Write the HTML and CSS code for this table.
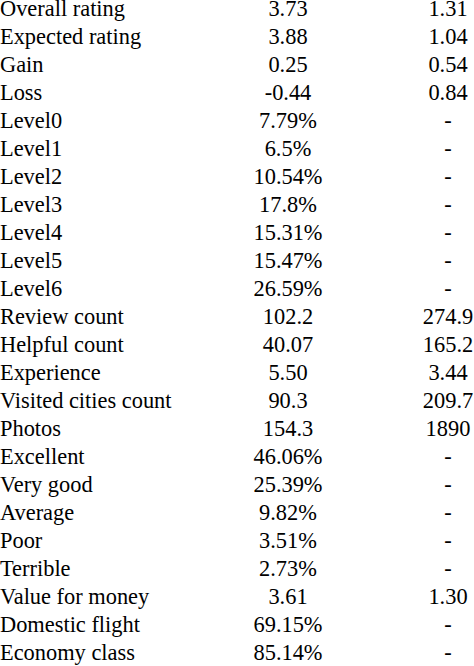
FILE: index.html
```html
<!DOCTYPE html>
<html>
<head>
<meta charset="utf-8">
<link rel="stylesheet" href="styles.css">
</head>
<body>
<div class="table">
  <div class="row"><span class="c1">Overall rating</span><span class="c2">3.73</span><span class="c3">1.31</span></div>
  <div class="row"><span class="c1">Expected rating</span><span class="c2">3.88</span><span class="c3">1.04</span></div>
  <div class="row"><span class="c1">Gain</span><span class="c2">0.25</span><span class="c3">0.54</span></div>
  <div class="row"><span class="c1">Loss</span><span class="c2">-0.44</span><span class="c3">0.84</span></div>
  <div class="row"><span class="c1">Level0</span><span class="c2">7.79%</span><span class="c3">-</span></div>
  <div class="row"><span class="c1">Level1</span><span class="c2">6.5%</span><span class="c3">-</span></div>
  <div class="row"><span class="c1">Level2</span><span class="c2">10.54%</span><span class="c3">-</span></div>
  <div class="row"><span class="c1">Level3</span><span class="c2">17.8%</span><span class="c3">-</span></div>
  <div class="row"><span class="c1">Level4</span><span class="c2">15.31%</span><span class="c3">-</span></div>
  <div class="row"><span class="c1">Level5</span><span class="c2">15.47%</span><span class="c3">-</span></div>
  <div class="row"><span class="c1">Level6</span><span class="c2">26.59%</span><span class="c3">-</span></div>
  <div class="row"><span class="c1">Review count</span><span class="c2">102.2</span><span class="c3">274.9</span></div>
  <div class="row"><span class="c1">Helpful count</span><span class="c2">40.07</span><span class="c3">165.2</span></div>
  <div class="row"><span class="c1">Experience</span><span class="c2">5.50</span><span class="c3">3.44</span></div>
  <div class="row"><span class="c1">Visited cities count</span><span class="c2">90.3</span><span class="c3">209.7</span></div>
  <div class="row"><span class="c1">Photos</span><span class="c2">154.3</span><span class="c3">1890</span></div>
  <div class="row"><span class="c1">Excellent</span><span class="c2">46.06%</span><span class="c3">-</span></div>
  <div class="row"><span class="c1">Very good</span><span class="c2">25.39%</span><span class="c3">-</span></div>
  <div class="row"><span class="c1">Average</span><span class="c2">9.82%</span><span class="c3">-</span></div>
  <div class="row"><span class="c1">Poor</span><span class="c2">3.51%</span><span class="c3">-</span></div>
  <div class="row"><span class="c1">Terrible</span><span class="c2">2.73%</span><span class="c3">-</span></div>
  <div class="row"><span class="c1">Value for money</span><span class="c2">3.61</span><span class="c3">1.30</span></div>
  <div class="row"><span class="c1">Domestic flight</span><span class="c2">69.15%</span><span class="c3">-</span></div>
  <div class="row"><span class="c1">Economy class</span><span class="c2">85.14%</span><span class="c3">-</span></div>
</div>
</body>
</html>
```

FILE: styles.css
```css
html, body {
  margin: 0;
  padding: 0;
  background: #ffffff;
  overflow: hidden;
}

.table {
  font-family: "Liberation Serif", "Times New Roman", serif;
  font-size: 22.4px;
  line-height: 18px;
  color: #000;
}

.row {
  display: grid;
  grid-template-columns: 226px 124px 124px;
  align-items: start;
  height: 28px;
}

.c1 {
  text-align: left;
  white-space: nowrap;
}

.c2 {
  text-align: center;
}

.c3 {
  text-align: center;
  padding-left: 72px;
}
```
